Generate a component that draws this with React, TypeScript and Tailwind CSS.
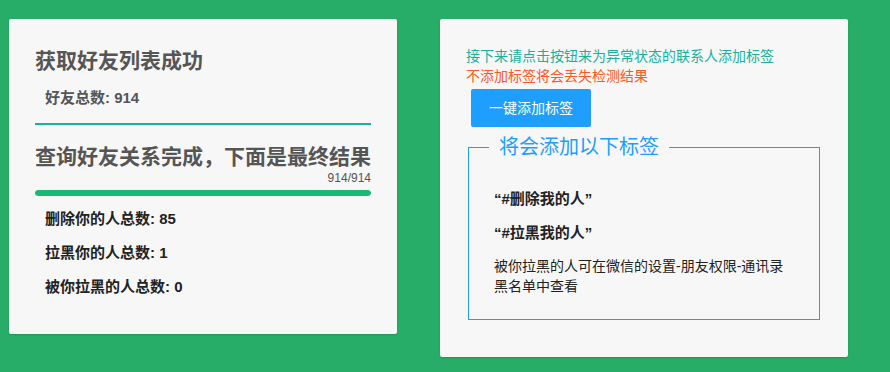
import React from 'react';

const font = { fontFamily: '"Liberation Sans", "Noto Sans CJK SC", sans-serif' };

const stats = [
  { label: '删除你的人总数', value: 85 },
  { label: '拉黑你的人总数', value: 1 },
  { label: '被你拉黑的人总数', value: 0 },
];

function ResultCard() {
  return (
    <div className="w-[388px] bg-[#f7f7f7] rounded-[2px] shadow-[0_1px_2px_rgba(0,0,0,0.15)] px-[26px] pt-[28px] pb-[37px]">
      <h2 className="text-[21px] leading-[28px] font-bold text-[#555]">获取好友列表成功</h2>
      <div className="mt-[13px] pl-[10px] text-[15px] leading-[20px] font-bold text-[#555]">好友总数: 914</div>
      <div className="mt-[15px] h-[2px] bg-[#17b3a1]" />
      <h2 className="mt-[20px] text-[21px] leading-[24px] font-bold text-[#555] whitespace-nowrap">
        查询好友关系完成，下面是最终结果
      </h2>
      <div className="text-right text-[12px] leading-[18px] text-[#555]">914/914</div>
      <div className="mt-[3px] h-[6px] rounded-full bg-[#e2e2e2] overflow-hidden">
        <div className="h-full rounded-full bg-[#19b875]" style={{ width: `${(914 / 914) * 100}%` }} />
      </div>
      <div className="mt-[13px] pl-[10px] flex flex-col gap-[14px]">
        {stats.map(s => (
          <div key={s.label} className="text-[15px] leading-[20px] font-bold text-[#222]">
            {s.label}: {s.value}
          </div>
        ))}
      </div>
    </div>
  );
}

function TagCard() {
  return (
    <div className="w-[408px] bg-[#f7f7f7] rounded-[2px] shadow-[0_1px_2px_rgba(0,0,0,0.15)] px-[26px] pt-[27px] pb-[37px]">
      <p className="text-[14px] leading-[20px] text-[#15b39e]">接下来请点击按钮来为异常状态的联系人添加标签</p>
      <p className="text-[14px] leading-[20px] text-[#ff5722]">不添加标签将会丢失检测结果</p>
      <button className="mt-[3px] ml-[5px] h-[38px] px-[18px] rounded-[2px] bg-[#1e9fff] text-white text-[14px]">
        一键添加标签
      </button>
      <fieldset className="mt-[8px] mx-[2px] border border-[#1e9fff] px-[25px] pt-[30px] pb-[23px]">
        <legend className="ml-[-5px] px-[10px] text-[20px] leading-[24px] font-normal text-[#1e9fff]">将会添加以下标签</legend>
        <div className="text-[15px] leading-[20px] font-bold text-[#222]">“#删除我的人”</div>
        <div className="mt-[14px] text-[15px] leading-[20px] font-bold text-[#222]">“#拉黑我的人”</div>
        <p className="mt-[13px] text-[14px] leading-[20px] text-[#222]">
          被你拉黑的人可在微信的设置-朋友权限-通讯录
          <br />
          黑名单中查看
        </p>
      </fieldset>
    </div>
  );
}

export default function App() {
  return (
    <div className="w-[890px] h-[372px] bg-[#28ad68] pt-[19px] pl-[9px] flex items-start gap-[43px]" style={font}>
      <ResultCard />
      <TagCard />
    </div>
  );
}
